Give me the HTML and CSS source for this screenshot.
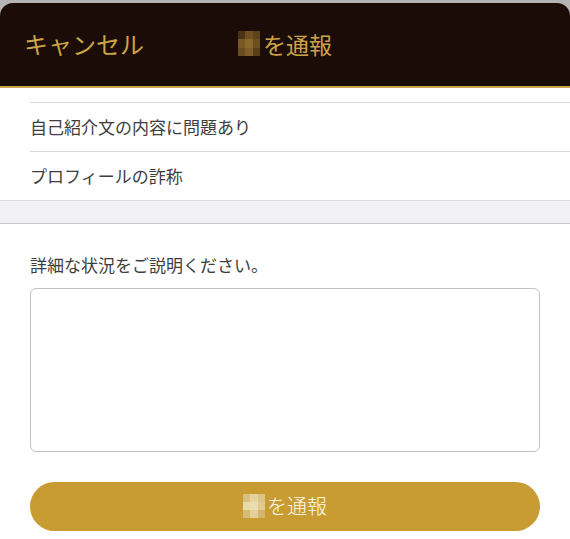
FILE: index.html
```html
<!DOCTYPE html>
<html lang="ja">
<head>
<meta charset="utf-8">
<link rel="stylesheet" href="styles.css">
</head>
<body>
<div class="backdrop">
  <header class="header">
    <div class="cancel">キャンセル</div>
    <div class="title"><span class="mosaic dark"><i></i><i></i><i></i><i></i><i></i><i></i><i></i><i></i><i></i></span>を通報</div>
    <div></div>
  </header>
</div>
<main class="sheet">
  <ul class="list">
    <li class="row partial"></li>
    <li class="row">自己紹介文の内容に問題あり</li>
    <li class="row last">プロフィールの詐称</li>
  </ul>
  <div class="band"></div>
  <section class="form">
    <p class="label">詳細な状況をご説明ください。</p>
    <textarea class="detail"></textarea>
    <button class="submit"><span class="mosaic light"><i></i><i></i><i></i><i></i><i></i><i></i><i></i><i></i><i></i></span>を通報</button>
  </section>
</main>
</body>
</html>
```
FILE: styles.css
```css
* { box-sizing: border-box; }
html, body {
  margin: 0;
  padding: 0;
}
body {
  width: 570px;
  height: 539px;
  overflow: hidden;
  background: #ffffff;
  font-family: "Noto Sans CJK JP", "Noto Sans", sans-serif;
  font-weight: 400;
}
.backdrop {
  background: #b4b4b4;
  padding-top: 3px;
}
.header {
  height: 85px;
  background: #1b0c08;
  border-radius: 13px 13px 0 0;
  border-bottom: 2px solid #cba649;
  display: grid;
  grid-template-columns: 1fr auto 1fr;
  align-items: center;
  color: #cba545;
  font-size: 24px;
  line-height: 30px;
  font-weight: 400;
}
.cancel {
  padding-left: 24px;
  padding-bottom: 2px;
}
.title {
  display: flex;
  align-items: center;
  padding-bottom: 2px;
  font-size: 23px;
}
.mosaic {
  display: inline-grid;
  grid-template-columns: repeat(3, 1fr);
  grid-template-rows: repeat(3, 1fr);
  width: 22px;
  height: 25px;
  margin-right: 3px;
  filter: blur(0.6px);
}
.mosaic.dark i:nth-child(1) { background: #4a3315; }
.mosaic.dark i:nth-child(2) { background: #6e5020; }
.mosaic.dark i:nth-child(3) { background: #5e431a; }
.mosaic.dark i:nth-child(4) { background: #7a5a24; }
.mosaic.dark i:nth-child(5) { background: #8a672a; }
.mosaic.dark i:nth-child(6) { background: #6c4e1f; }
.mosaic.dark i:nth-child(7) { background: #6a4d1f; }
.mosaic.dark i:nth-child(8) { background: #7e5e26; }
.mosaic.dark i:nth-child(9) { background: #5a4019; }
.mosaic.light i:nth-child(1) { background: #d9c07e; }
.mosaic.light i:nth-child(2) { background: #e6d29e; }
.mosaic.light i:nth-child(3) { background: #dcc486; }
.mosaic.light i:nth-child(4) { background: #e9d8aa; }
.mosaic.light i:nth-child(5) { background: #ecdcb1; }
.mosaic.light i:nth-child(6) { background: #e1ca8e; }
.mosaic.light i:nth-child(7) { background: #d6bb74; }
.mosaic.light i:nth-child(8) { background: #e4cf99; }
.mosaic.light i:nth-child(9) { background: #d2b66c; }
.list {
  list-style: none;
  margin: 0;
  padding: 0 0 0 30px;
}
.row {
  height: 49px;
  border-bottom: 1px solid #d9d9dc;
  display: flex;
  align-items: center;
  font-size: 17px;
  color: #3e3e3e;
  padding-bottom: 1px;
}
.row.partial {
  height: 15px;
}
.row.last {
  height: 48px;
  border-bottom: none;
}
.band {
  height: 24px;
  background: #f2f1f6;
  border-top: 1px solid #dcdce0;
  border-bottom: 1px solid #c8c7cc;
}
.form {
  padding: 29px 30px 0 30px;
  display: flex;
  flex-direction: column;
}
.label {
  margin: 0;
  font-size: 17px;
  line-height: 24px;
  color: #3e3e3e;
}
.detail {
  margin-top: 11px;
  height: 164px;
  border: 1.5px solid #c2c2c4;
  border-radius: 6px;
  resize: none;
  background: #ffffff;
  font: inherit;
}
.submit {
  margin-top: 30px;
  height: 49px;
  border: none;
  border-radius: 25px;
  background: #c99c33;
  color: #fdf8ea;
  font-family: inherit;
  font-weight: 300;
  font-size: 20px;
  display: flex;
  align-items: center;
  justify-content: center;
  padding: 0 0 2px 0;
}
.submit .mosaic {
  width: 22px;
  height: 24px;
  margin-right: 2px;
}
```
